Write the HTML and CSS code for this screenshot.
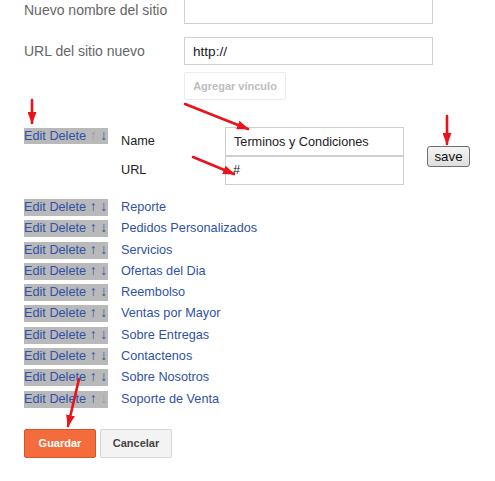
FILE: index.html
```html
<!DOCTYPE html>
<html lang="es">
<head>
<meta charset="utf-8">
<title>Enlaces</title>
<link rel="stylesheet" href="styles.css">
</head>
<body>
<div class="page">
  <div class="field first">
    <label class="flabel">Nuevo nombre del sitio</label>
    <input class="finput" type="text" value="">
  </div>
  <div class="field second">
    <label class="flabel">URL del sitio nuevo</label>
    <input class="finput" type="text" value="http://">
  </div>
  <div class="addrow">
    <button class="addbtn" type="button">Agregar vínculo</button>
  </div>

  <div class="editrow">
    <span class="ops"><a class="op">Edit</a> <a class="op">Delete</a> <a class="arr off">↑</a> <a class="arr">↓</a></span>
    <div class="editor">
      <span class="elabel">Name</span>
      <input class="einput" type="text" value="Terminos y Condiciones">
      <span class="elabel">URL</span>
      <input class="einput url" type="text" value="#">
    </div>
    <button class="savebtn" type="button">save</button>
  </div>

  <ul class="links">
    <li class="item"><span class="ops"><a class="op">Edit</a> <a class="op">Delete</a> <a class="arr">↑</a> <a class="arr">↓</a></span><a class="name">Reporte</a></li>
    <li class="item"><span class="ops"><a class="op">Edit</a> <a class="op">Delete</a> <a class="arr">↑</a> <a class="arr">↓</a></span><a class="name">Pedidos Personalizados</a></li>
    <li class="item"><span class="ops"><a class="op">Edit</a> <a class="op">Delete</a> <a class="arr">↑</a> <a class="arr">↓</a></span><a class="name">Servicios</a></li>
    <li class="item"><span class="ops"><a class="op">Edit</a> <a class="op">Delete</a> <a class="arr">↑</a> <a class="arr">↓</a></span><a class="name">Ofertas del Dia</a></li>
    <li class="item"><span class="ops"><a class="op">Edit</a> <a class="op">Delete</a> <a class="arr">↑</a> <a class="arr">↓</a></span><a class="name">Reembolso</a></li>
    <li class="item"><span class="ops"><a class="op">Edit</a> <a class="op">Delete</a> <a class="arr">↑</a> <a class="arr">↓</a></span><a class="name">Ventas por Mayor</a></li>
    <li class="item"><span class="ops"><a class="op">Edit</a> <a class="op">Delete</a> <a class="arr">↑</a> <a class="arr">↓</a></span><a class="name">Sobre Entregas</a></li>
    <li class="item"><span class="ops"><a class="op">Edit</a> <a class="op">Delete</a> <a class="arr">↑</a> <a class="arr">↓</a></span><a class="name">Contactenos</a></li>
    <li class="item"><span class="ops"><a class="op">Edit</a> <a class="op">Delete</a> <a class="arr">↑</a> <a class="arr">↓</a></span><a class="name">Sobre Nosotros</a></li>
    <li class="item"><span class="ops"><a class="op">Edit</a> <a class="op">Delete</a> <a class="arr">↑</a> <a class="arr off">↓</a></span><a class="name">Soporte de Venta</a></li>
  </ul>

  <div class="actions">
    <button class="btn primary" type="button">Guardar</button>
    <button class="btn secondary" type="button">Cancelar</button>
  </div>
</div>

<svg class="annot" width="495" height="481" viewBox="0 0 495 481" xmlns="http://www.w3.org/2000/svg">
  <defs>
    <marker id="head" markerUnits="userSpaceOnUse" markerWidth="12" markerHeight="9" refX="11" refY="4.5" orient="auto">
      <path d="M0,0 L12,4.5 L0,9 Z" fill="#e8141b"/>
    </marker>
  </defs>
  <g stroke="#e8141b" stroke-width="2.6" stroke-linecap="round" fill="none">
    <line x1="32" y1="100" x2="32" y2="123" marker-end="url(#head)"/>
    <line x1="185" y1="104" x2="248" y2="129" marker-end="url(#head)"/>
    <line x1="193" y1="157" x2="234" y2="174" marker-end="url(#head)"/>
    <line x1="447" y1="116" x2="447" y2="144" marker-end="url(#head)"/>
    <line x1="79" y1="379" x2="68" y2="426" marker-end="url(#head)"/>
  </g>
</svg>
</body>
</html>
```

FILE: styles.css
```css
html, body {
  margin: 0;
  padding: 0;
  background: #ffffff;
}

body {
  font-family: "Liberation Sans", Arial, sans-serif;
  width: 495px;
  height: 481px;
  overflow: hidden;
  position: relative;
}

.page {
  padding-left: 24px;
}

.field {
  display: flex;
  align-items: center;
  height: 28px;
}

.field.first {
  margin-top: -4px;
}

.field.second {
  margin-top: 13px;
}

.flabel {
  width: 160px;
  flex: none;
  font-size: 14px;
  color: #666666;
}

.finput {
  box-sizing: border-box;
  width: 249px;
  height: 28px;
  margin: 0;
  border: 1px solid #d0d0d0;
  padding: 0 8px;
  font-family: "Liberation Sans", Arial, sans-serif;
  font-size: 13.6px;
  color: #222222;
  outline: none;
}

.addrow {
  margin-top: 7px;
  padding-left: 160px;
  height: 28px;
}

.addbtn {
  box-sizing: border-box;
  width: 102px;
  height: 28px;
  margin: 0;
  padding: 0;
  border: 1px solid #ececec;
  background: #ffffff;
  border-radius: 2px;
  font-family: "Liberation Sans", Arial, sans-serif;
  font-size: 11px;
  font-weight: bold;
  color: #bdbdbd;
}

.editrow {
  margin-top: 27px;
  display: flex;
  align-items: flex-start;
}

.ops {
  display: inline-block;
  flex: none;
  width: 84px;
  height: 17px;
  line-height: 17px;
  background: #b9b9b9;
  font-size: 12.7px;
  white-space: nowrap;
  overflow: hidden;
}

.editrow .ops {
  margin-top: 1px;
  height: 16px;
  line-height: 16px;
}

.op {
  color: #2f52a8;
}

.arr {
  display: inline-block;
  width: 7px;
  text-align: center;
  color: #2f52a8;
  font-family: "Liberation Sans", Arial, sans-serif;
  font-size: 14px;
  line-height: 14px;
}

.arr.off {
  color: #999999;
}

.editor {
  margin-left: 13px;
  display: grid;
  grid-template-columns: 104px 179px;
  grid-template-rows: 29px 29px;
  align-items: center;
}

.elabel {
  font-size: 12.7px;
  color: #222222;
  padding-bottom: 2px;
}

.einput {
  box-sizing: border-box;
  width: 179px;
  height: 29px;
  margin: 0;
  border: 1px solid #cfcfcf;
  padding: 0 8px;
  font-family: "Liberation Sans", Arial, sans-serif;
  font-size: 12.7px;
  color: #222222;
  outline: none;
}

.einput.url {
  margin-top: -1px;
  padding-left: 7px;
}

.savebtn {
  box-sizing: border-box;
  align-self: center;
  margin: 0 0 0 23px;
  width: 43px;
  height: 21px;
  padding: 0;
  border: 1px solid #707070;
  border-radius: 3px;
  background: linear-gradient(#f4f4f4, #dedede);
  font-family: "Liberation Sans", Arial, sans-serif;
  font-size: 13.3px;
  color: #111111;
}

.links {
  list-style: none;
  margin: 14px 0 0 0;
  padding: 0;
}

.item {
  display: flex;
  align-items: flex-start;
  height: 21.3px;
}

.name {
  margin-left: 13px;
  font-size: 12.7px;
  line-height: 17px;
  color: #2f52a8;
}

.actions {
  margin-top: 17px;
  display: flex;
  gap: 4px;
}

.btn {
  box-sizing: border-box;
  width: 72px;
  height: 29px;
  margin: 0;
  padding: 0;
  border-radius: 2px;
  font-family: "Liberation Sans", Arial, sans-serif;
  font-size: 11px;
  font-weight: bold;
}

.btn.primary {
  background: #f46b3c;
  border: 1px solid #d6562b;
  color: #ffffff;
}

.btn.secondary {
  background: #f3f3f3;
  border: 1px solid #d6d6d6;
  color: #444444;
}

.annot {
  position: absolute;
  left: 0;
  top: 0;
  pointer-events: none;
}
```
